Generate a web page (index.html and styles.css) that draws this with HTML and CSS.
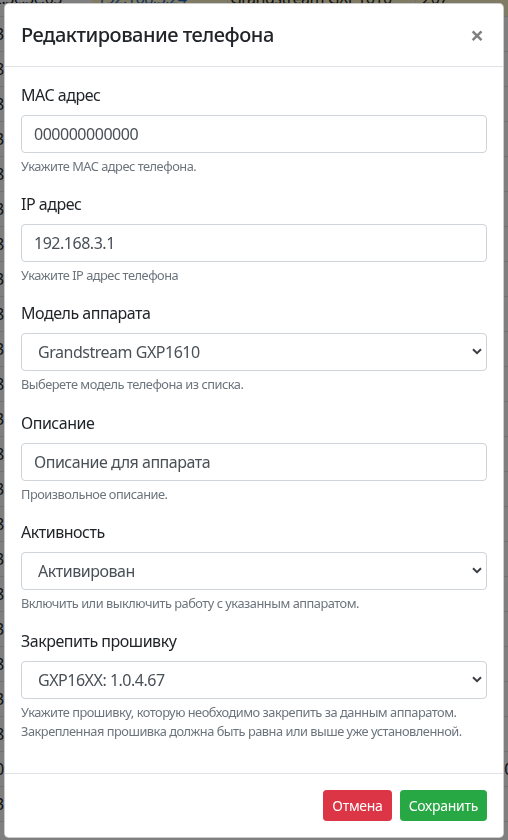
FILE: index.html
```html
<!DOCTYPE html>
<html lang="ru">
<head>
<meta charset="utf-8">
<title>Редактирование телефона</title>
<link rel="stylesheet" href="styles.css">
</head>
<body>
<div class="page">
  <div class="bg-row bg-row-first">
    <span class="cell c1">00:0b:82:3c:3c:03</span>
    <span class="cell c2 hl"><span class="ip">192.168.3.24</span></span>
    <span class="cell c3 hl">Grandstream GXP1610</span>
    <span class="cell c4 hl">207</span>
  </div>
  <div class="bg-row"><span class="edge">3</span></div>
  <div class="bg-row"><span class="edge">8</span></div>
  <div class="bg-row"><span class="edge">8</span></div>
  <div class="bg-row"><span class="edge">3</span></div>
  <div class="bg-row"><span class="edge">8</span></div>
  <div class="bg-row"><span class="edge">3</span></div>
  <div class="bg-row"><span class="edge">8</span></div>
  <div class="bg-row"><span class="edge">3</span></div>
  <div class="bg-row"><span class="edge">8</span></div>
  <div class="bg-row"><span class="edge">3</span></div>
  <div class="bg-row"><span class="edge">8</span></div>
  <div class="bg-row"><span class="edge">3</span></div>
  <div class="bg-row"><span class="edge">8</span></div>
  <div class="bg-row"><span class="edge">3</span></div>
  <div class="bg-row"><span class="edge">8</span></div>
  <div class="bg-row"><span class="edge">3</span></div>
  <div class="bg-row"><span class="edge">8</span></div>
  <div class="bg-row"><span class="edge">3</span></div>
  <div class="bg-row"><span class="edge">8</span></div>
  <div class="bg-row"><span class="edge">3</span></div>
  <div class="bg-row"><span class="edge">8</span></div>
  <div class="bg-row"><span class="edge">0</span><span class="edge-r">0</span></div>
  <div class="bg-row"><span class="edge">3</span></div>
</div>

<div class="backdrop"></div>

<div class="modal">
  <div class="modal-content">
    <div class="modal-header">
      <h5 class="modal-title">Редактирование телефона</h5>
      <button type="button" class="close" aria-label="Close">×</button>
    </div>
    <div class="modal-body">
      <div class="form-group">
        <label class="label">MAC адрес</label>
        <input class="form-control" type="text" value="000000000000">
        <small class="help">Укажите MAC адрес телефона.</small>
      </div>
      <div class="form-group">
        <label class="label">IP адрес</label>
        <input class="form-control" type="text" value="192.168.3.1">
        <small class="help">Укажите IP адрес телефона</small>
      </div>
      <div class="form-group">
        <label class="label">Модель аппарата</label>
        <div class="select-wrap">
          <select class="form-control select"><option>Grandstream GXP1610</option></select>
          <svg class="chev" width="10" height="7" viewBox="0 0 10 7"><path d="M1 1.3 L5 5.2 L9 1.3" fill="none" stroke="#3a3e43" stroke-width="2"/></svg>
        </div>
        <small class="help">Выберете модель телефона из списка.</small>
      </div>
      <div class="form-group">
        <label class="label">Описание</label>
        <input class="form-control" type="text" value="Описание для аппарата">
        <small class="help">Произвольное описание.</small>
      </div>
      <div class="form-group">
        <label class="label">Активность</label>
        <div class="select-wrap">
          <select class="form-control select"><option>Активирован</option></select>
          <svg class="chev" width="10" height="7" viewBox="0 0 10 7"><path d="M1 1.3 L5 5.2 L9 1.3" fill="none" stroke="#3a3e43" stroke-width="2"/></svg>
        </div>
        <small class="help">Включить или выключить работу с указанным аппаратом.</small>
      </div>
      <div class="form-group">
        <label class="label">Закрепить прошивку</label>
        <div class="select-wrap">
          <select class="form-control select"><option>GXP16XX: 1.0.4.67</option></select>
          <svg class="chev" width="10" height="7" viewBox="0 0 10 7"><path d="M1 1.3 L5 5.2 L9 1.3" fill="none" stroke="#3a3e43" stroke-width="2"/></svg>
        </div>
        <small class="help">Укажите прошивку, которую необходимо закрепить за данным аппаратом.<br>Закрепленная прошивка должна быть равна или выше уже установленной.</small>
      </div>
    </div>
    <div class="modal-footer">
      <button type="button" class="btn btn-danger">Отмена</button>
      <button type="button" class="btn btn-success">Сохранить</button>
    </div>
  </div>
</div>
</body>
</html>
```
FILE: styles.css
```css
* { box-sizing: border-box; }

html, body {
  margin: 0;
  padding: 0;
  height: 100%;
  overflow: hidden;
}

body {
  font-family: "Segoe UI", "Noto Sans", "Open Sans", sans-serif;
  font-size: 16px;
  line-height: 1.5;
  letter-spacing: -0.03em;
  color: #212529;
  background: #fff;
}

/* background page behind the dialog */
.page {
  margin-top: -20px;
  display: flex;
  flex-direction: column;
}
.bg-row {
  height: 35px;
  display: flex;
  align-items: center;
  justify-content: space-between;
  border-bottom: 1px solid #dee2e6;
  font-size: 16px;
  white-space: nowrap;
}
.bg-row-first {
  height: 37px;
  justify-content: flex-start;
}
.cell {
  height: 100%;
  display: flex;
  align-items: center;
  overflow: hidden;
}
.c1 { width: 92px; justify-content: flex-end; padding-right: 30px; }
.c2 { width: 135px; padding-left: 5px; }
.c3 { width: 188px; padding-left: 2px; border-left: 1px solid #dee2e6; }
.c4 { flex: 1; padding-left: 6px; border-left: 1px solid #dee2e6; }
.hl { background: #fff6c8; }
.ip { color: #1f66c7; }
.edge {
  margin-left: -5px;
}
.edge-r {
  margin-right: -5px;
}

.backdrop {
  position: fixed;
  inset: 0;
  background: rgba(0, 0, 0, 0.5);
}

.modal {
  position: fixed;
  inset: 0;
  display: flex;
  justify-content: center;
  align-items: flex-start;
  padding-top: 3px;
}

.modal-content {
  width: 500px;
  background: #fff;
  border: 1px solid rgba(0, 0, 0, 0.2);
  border-radius: 4.8px;
  display: flex;
  flex-direction: column;
}

.modal-header {
  display: flex;
  align-items: flex-start;
  justify-content: space-between;
  padding: 16px;
  border-bottom: 1px solid #dee2e6;
}
.modal-title {
  margin: 0;
  font-size: 20px;
  font-weight: 500;
  line-height: 1.5;
}
.close {
  background: none;
  border: 0;
  padding: 0 3px 0 0;
  margin: 3px 0 0 0;
  font-family: inherit;
  font-size: 24px;
  font-weight: 700;
  line-height: 1;
  color: #000;
  opacity: 0.5;
}

.modal-body {
  padding: 16px;
}

.form-group {
  margin-bottom: 16px;
  display: flex;
  flex-direction: column;
}

.label {
  display: block;
  margin-bottom: 8px;
  font-size: 16px;
  line-height: 24px;
}

.form-control {
  display: block;
  width: 100%;
  height: 38px;
  padding: 6px 12px;
  font-family: inherit;
  font-size: 16px;
  letter-spacing: -0.03em;
  line-height: 1.5;
  color: #495057;
  background: #fff;
  border: 1px solid #ced4da;
  border-radius: 4px;
  margin: 0;
}

.select-wrap {
  position: relative;
}
.select {
  appearance: none;
  -webkit-appearance: none;
  padding-left: 16px;
}
.chev {
  position: absolute;
  right: 5px;
  top: 15px;
}

.help {
  display: block;
  margin-top: 4px;
  font-size: 12.8px;
  line-height: 1.5;
  color: #6c757d;
}

.modal-footer {
  display: flex;
  justify-content: flex-end;
  align-items: center;
  padding: 12px;
  border-top: 1px solid #dee2e6;
}
.btn {
  margin: 4px;
  height: 31px;
  padding: 0 8px;
  font-family: inherit;
  font-size: 14px;
  letter-spacing: -0.02em;
  line-height: 29px;
  color: #fff;
  border: 1px solid transparent;
  border-radius: 3.2px;
}
.btn-danger { background: #dc3545; border-color: #dc3545; }
.btn-success { background: #28a745; border-color: #28a745; }
```
